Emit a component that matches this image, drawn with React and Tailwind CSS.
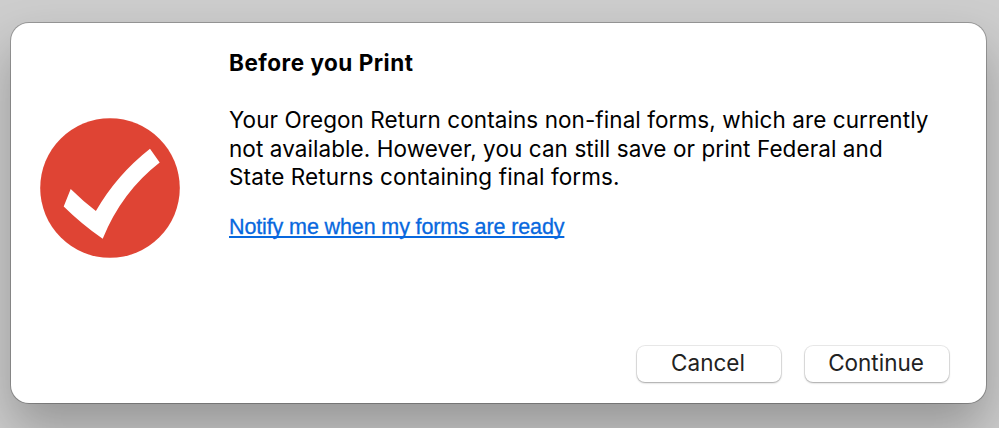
function DialogButton({ children }) {
  return (
    <button
      type="button"
      className="flex h-9 w-36 justify-center rounded-lg bg-white pr-0.5 text-[22.5px] leading-[34px] text-[#222] shadow-[0_0_0_1px_rgba(0,0,0,0.08),0_1px_2px_rgba(0,0,0,0.3)]"
    >
      {children}
    </button>
  );
}

function CheckLogo() {
  return (
    <svg viewBox="0 0 140 140" className="mt-[95px] h-[140px] w-[140px] shrink-0">
      <circle cx="70" cy="70" r="69.8" fill="#df4434" />
      <path d="M23.7 88.4 L30.7 70.9 Q43 83 55.9 93 Q76.5 57 110 30.7 L119.7 44.4 Q81.5 74 62.7 120.7 Q41.5 106 23.7 88.4 Z" fill="#fff" />
    </svg>
  );
}

export default function App() {
  return (
    <div className="h-[428px] overflow-hidden bg-[#cdcdcd] pl-[11px] pt-[23px] font-['Inter',sans-serif]">
      <div className="flex h-[380px] w-[975px] rounded-[18px] bg-white pl-[29px] shadow-[0_0_0_1px_rgba(0,0,0,0.25),0_26px_50px_rgba(0,0,0,0.27)]">
        <CheckLogo />
        <div className="ml-[49px] flex flex-1 flex-col text-black">
          <h1 className="mt-[26px] whitespace-nowrap text-[22.5px] font-bold leading-7 tracking-[0.5px]">
            Before you Print
          </h1>
          <p className="mt-[29px] whitespace-nowrap text-[22.5px] leading-[28.5px] tracking-[0.075px]">
            Your Oregon Return contains non-final forms, which are currently
            <br />
            not available. However, you can still save or print Federal and
            <br />
            <span className="tracking-[0.12px]">State Returns containing final forms.</span>
          </p>
          <a
            href="#"
            className="mt-[21px] self-start whitespace-nowrap font-['Liberation_Sans',sans-serif] text-[21.5px] leading-7 tracking-[-0.12px] text-[#0868de] underline decoration-2 underline-offset-2 [text-decoration-skip-ink:none] [-webkit-text-stroke:0.3px_#0868de]"
          >
            Notify me when my forms are ready
          </a>
          <div className="mb-[21px] mr-[37px] mt-auto flex justify-end gap-6">
            <DialogButton>Cancel</DialogButton>
            <DialogButton>Continue</DialogButton>
          </div>
        </div>
      </div>
    </div>
  );
}
